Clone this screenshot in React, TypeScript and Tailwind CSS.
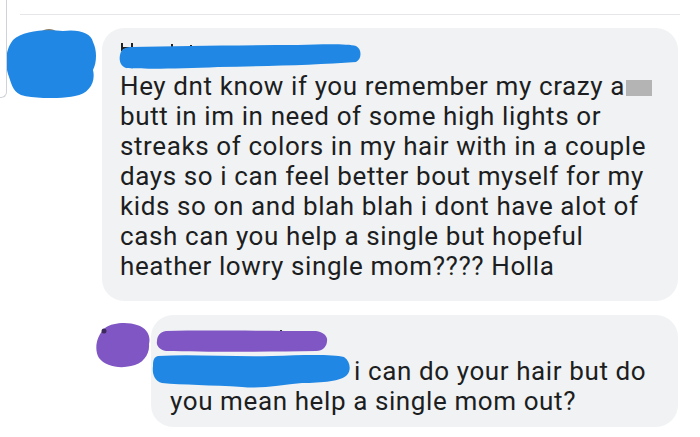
import React from 'react';

const FIRST_LINES = [
  'butt in im in need of some high lights or',
  'streaks of colors in my hair with in a couple',
  'days so i can feel better bout myself for my',
  'kids so on and blah blah i dont have alot of',
  'cash can you help a single but hopeful',
  'heather lowry single mom???? Holla',
];

function BlueAvatar() {
  return (
    <svg viewBox="0 0 92 70" className="block shrink-0 w-[92px] h-[70px]">
      <path d="M36 4 C40 0, 48 0, 52 4 L50 8 L38 8 Z" fill="#8c7b62" />
      <path
        d="M8 12 C18 2, 42 1, 58 3 C74 1, 86 5, 88 14 C92 22, 92 34, 88 42 C91 54, 84 66, 70 68 C56 71, 30 71, 16 67 C7 63, 6 54, 3 46 C0 36, 0 22, 8 12 Z"
        fill="#2088e4"
      />
    </svg>
  );
}

function PurpleAvatar() {
  return (
    <svg viewBox="0 0 56 46" className="block shrink-0 w-[56px] h-[46px]">
      <path
        d="M10 6 C18 0, 34 0, 42 3 C52 6, 56 14, 54 22 C55 32, 48 42, 36 44 C24 47, 10 44, 4 36 C-1 28, 1 14, 10 6 Z"
        fill="#7f56c3"
      />
      <circle cx="9" cy="9" r="2.5" fill="#3d2a5c" />
    </svg>
  );
}

function NameScribble() {
  return (
    <svg viewBox="0 0 244 26" className="block w-[244px] h-[26px]">
      <rect x="3" y="0" width="2" height="8" fill="#222" />
      <rect x="13" y="0" width="2" height="8" fill="#222" />
      <rect x="3" y="4" width="12" height="2" fill="#222" />
      <rect x="53" y="1" width="2" height="6" fill="#222" />
      <rect x="72" y="2" width="2" height="5" fill="#222" />
      <path
        d="M2 12 C3 6, 7 4, 14 4 C60 3, 120 2, 180 2 C210 1, 230 1, 238 3 C244 6, 244 16, 238 19 C200 22, 150 23, 100 24 C60 26, 20 26, 8 25 C2 23, 1 17, 2 12 Z"
        fill="#2088e4"
      />
    </svg>
  );
}

function PurpleScribble() {
  return (
    <svg viewBox="0 0 172 22" className="block w-[172px] h-[22px]">
      <rect x="124" y="0" width="2" height="4" fill="#333" />
      <path
        d="M10 1 C50 0, 110 1, 160 1 C168 2, 172 7, 171 11 C171 16, 167 21, 160 21 C110 22, 50 22, 10 21 C3 20, 0 15, 1 11 C1 6, 4 2, 10 1 Z"
        fill="#7f56c3"
      />
    </svg>
  );
}

function BlueScribble() {
  return (
    <svg viewBox="0 0 199 36" className="block shrink-0 w-[199px] h-[36px]">
      <path
        d="M6 2 C40 0, 80 3, 120 2 C150 1, 180 0, 192 3 C199 8, 199 17, 195 21 C190 27, 170 29, 150 29 C130 31, 110 35, 90 33 C60 31, 30 31, 10 29 C2 27, 0 19, 1 12 C1 6, 2 3, 6 2 Z"
        fill="#2088e4"
      />
    </svg>
  );
}

export default function App() {
  return (
    <div className="relative w-[700px] h-[437px] overflow-hidden bg-white font-['Roboto','Liberation_Sans',sans-serif] text-[26px] leading-[30px] tracking-[0.6px] text-[#1c1e21]">
      {/* frame corner from the post above */}
      <div className="absolute -left-[20px] top-0 w-[27px] h-[98px] border-r border-b border-[#cfd2d6] rounded-br-[6px]" />

      <div className="ml-[20px] mt-[14px] w-[660px] h-px bg-[#e4e6e9]" />

      {/* first comment */}
      <div className="flex items-start mt-[13px] pl-[5px]">
        <BlueAvatar />
        <div className="ml-[5px] w-[576px] rounded-[22px] bg-[#f0f2f4] pt-[15px] pb-[20px] pl-[18px]">
          <div className="-ml-[2px] mb-[2px]">
            <NameScribble />
          </div>
          <div className="whitespace-nowrap">
            Hey dnt know if you remember my crazy a
            <span className="inline-block ml-px w-[26px] h-[16px] bg-[#b4b4b4] relative top-px" />
          </div>
          {FIRST_LINES.map((line) => (
            <div key={line} className="whitespace-nowrap">
              {line}
            </div>
          ))}
        </div>
      </div>

      {/* reply */}
      <div className="flex items-start mt-[14px] pl-[95px]">
        <div className="mt-[7px]">
          <PurpleAvatar />
        </div>
        <div className="w-[527px] rounded-[22px] bg-[#f0f2f4] pt-[15px] pb-[11px] pl-[19px]">
          <div className="-ml-[14px] mb-[4px]">
            <PurpleScribble />
          </div>
          <div className="flex items-start whitespace-nowrap">
            <div className="-ml-[18px] -mt-[2px] -mb-[6px]">
              <BlueScribble />
            </div>
            <span className="ml-[3px]">i can do your hair but do</span>
          </div>
          <div className="whitespace-nowrap">you mean help a single mom out?</div>
        </div>
      </div>
    </div>
  );
}
